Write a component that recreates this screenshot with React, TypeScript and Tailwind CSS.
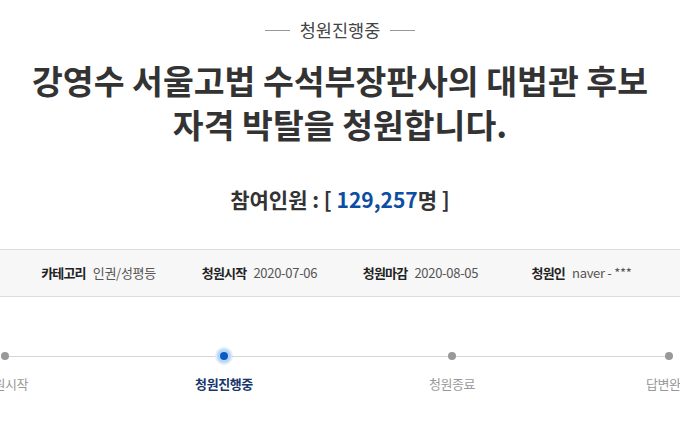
const steps = [
  { label: "청원시작", active: false, gap: "ml-[-45px]" },
  { label: "청원진행중", active: true, gap: "ml-[119px]" },
  { label: "청원종료", active: false, gap: "ml-[128px]" },
  { label: "답변완료", active: false, gap: "ml-[117px]" },
];

const segments = ["w-[211px]", "w-[220px]", "w-[209px]"];

const info = [
  { label: "카테고리", value: "인권/성평등" },
  { label: "청원시작", value: "2020-07-06" },
  { label: "청원마감", value: "2020-08-05" },
  { label: "청원인", value: "naver - ***" },
];

export default function App() {
  return (
    <div
      className="w-[680px] h-[421px] overflow-hidden bg-white text-[#333]"
      style={{ fontFamily: '"Noto Sans CJK KR", "Noto Sans", sans-serif' }}
    >
      {/* status label */}
      <div className="pt-[17px] flex items-center justify-center gap-[10px]">
        <span className="w-[25px] h-px bg-[#999]" />
        <span className="text-[17.5px] leading-[26px] text-[#444]">청원진행중</span>
        <span className="w-[25px] h-px bg-[#999]" />
      </div>

      {/* title */}
      <h1 className="mt-[15px] text-center text-[33.5px] leading-[44px] font-bold text-[#333]">
        강영수 서울고법 수석부장판사의 대법관 후보
        <br />
        자격 박탈을 청원합니다.
      </h1>

      {/* count */}
      <div className="mt-[39px] text-center text-[21px] leading-[28px] font-bold text-[#333]">
        참여인원 : [ <span className="text-[#0b4ea2]">129,257</span>명 ]
      </div>

      {/* info bar */}
      <div className="mt-[36px] h-[48px] border-y border-[#dcdcdc] bg-[#f7f7f7] flex items-center justify-center">
        <div className="w-[644px] grid grid-cols-4 text-[13px] leading-[20px]">
          {info.map((i) => (
            <div key={i.label} className="flex justify-center gap-[7px]">
              <span className="font-bold text-[#222] tracking-[-0.8px]">{i.label}</span>
              <span className="text-[#555] tracking-[-0.3px]">{i.value}</span>
            </div>
          ))}
        </div>
      </div>

      {/* progress steps */}
      <div className="mt-[55px]">
        <div className="ml-[1px] flex items-center">
          {steps.map((s, idx) => (
            <div key={s.label} className="flex items-center">
              {s.active ? (
                <span className="w-[8px] h-[8px] rounded-full bg-[#0a5bc4] shadow-[0_0_0_3px_#b9d6f8,0_0_0_5px_#e2eefc]" />
              ) : (
                <span className="w-[8px] h-[8px] rounded-full bg-[#999]" />
              )}
              {idx < segments.length && <span className={`${segments[idx]} h-px bg-[#d6d6d6]`} />}
            </div>
          ))}
        </div>
        <div className="mt-[14px] flex">
          {steps.map((s) => (
            <div
              key={s.label}
              className={`${s.gap} shrink-0 w-[100px] text-center text-[13px] leading-[20px] tracking-[-0.4px] ${
                s.active ? "font-bold text-[#17366c]" : "text-[#999]"
              }`}
            >
              {s.label}
            </div>
          ))}
        </div>
      </div>
    </div>
  );
}
